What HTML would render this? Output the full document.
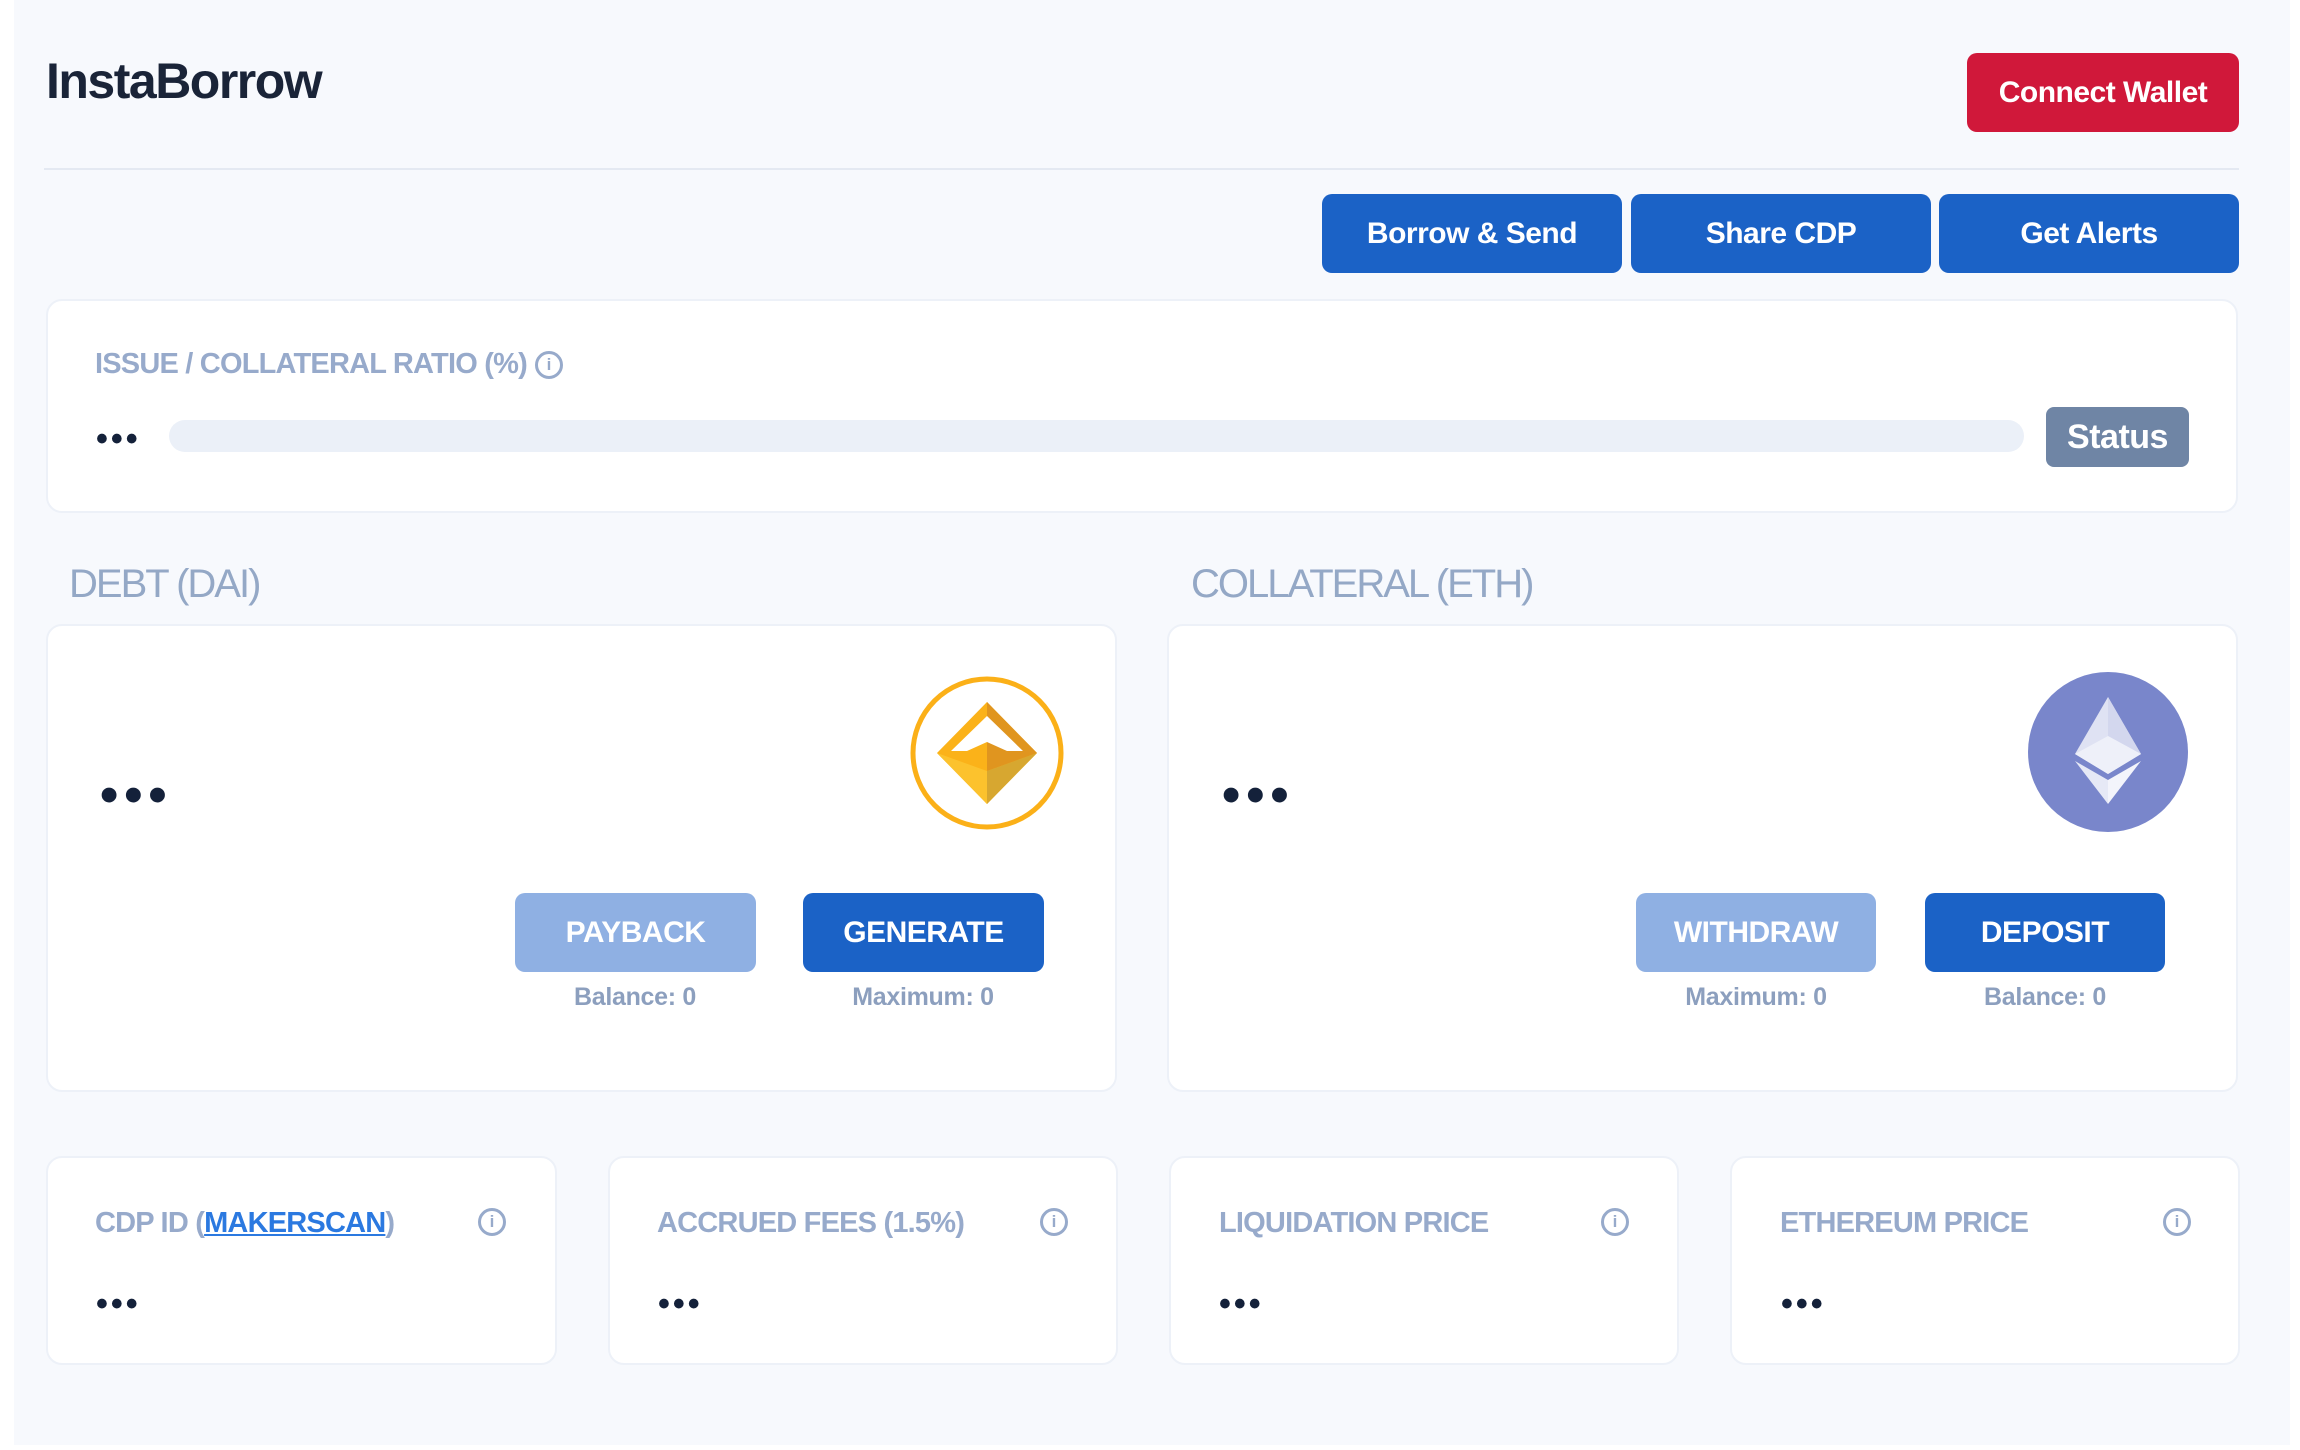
<!DOCTYPE html>
<html><head><meta charset="utf-8"><style>
*{box-sizing:border-box;margin:0;padding:0}
body{width:2300px;height:1450px;background:#fff;font-family:"Liberation Sans",Arial,sans-serif;position:relative;overflow:hidden}
.page{position:absolute;left:14px;top:0;width:2276px;height:1445px;background:#f7f9fd}
.a{position:absolute}
.title{left:46px;top:52px;font-size:50px;font-weight:700;color:#1a2438;letter-spacing:-1.5px}
.btn{position:absolute;border-radius:10px;color:#fff;font-weight:700;display:flex;align-items:center;justify-content:center;font-size:30px;letter-spacing:-0.5px}
.blue{background:#1b62c6}
.card{position:absolute;background:#fff;border:2px solid #edf1f8;border-radius:16px}
.lbl{position:absolute;color:#97aacb;font-weight:700;font-size:29px;white-space:nowrap;letter-spacing:-0.8px}
.dots{position:absolute;color:#14213a;font-weight:700;letter-spacing:3px}
.info{position:absolute;width:28px;height:28px;border:3px solid #97aacb;border-radius:50%;color:#97aacb;font-size:17px;font-weight:700;text-align:center;line-height:22px;letter-spacing:0}
.iinfo{display:inline-block;vertical-align:middle;margin-left:8px;width:28px;height:28px;border:3px solid #97aacb;border-radius:50%;color:#97aacb;font-size:17px;font-weight:700;text-align:center;line-height:22px;letter-spacing:0}
.sub{position:absolute;color:#8c9fbe;font-size:25px;font-weight:700;text-align:center;width:240px;letter-spacing:-0.3px}
</style></head><body>
<div class="page"></div>
<div class="a title">InstaBorrow</div>
<div class="btn" style="left:1967px;top:53px;width:272px;height:79px;background:#d0183a">Connect Wallet</div>
<div class="a" style="left:44px;top:168px;width:2195px;height:2px;background:#e4e9f2"></div>
<div class="btn blue" style="left:1322px;top:194px;width:300px;height:79px">Borrow &amp; Send</div>
<div class="btn blue" style="left:1631px;top:194px;width:300px;height:79px">Share CDP</div>
<div class="btn blue" style="left:1939px;top:194px;width:300px;height:79px">Get Alerts</div>

<div class="card" style="left:46px;top:299px;width:2192px;height:214px"></div>
<div class="lbl" style="left:95px;top:348px">ISSUE / COLLATERAL RATIO (%)<span class="iinfo">i</span></div>
<div class="dots" style="left:96px;top:420px;font-size:34px">•••</div>
<div class="a" style="left:169px;top:420px;width:1855px;height:32px;border-radius:16px;background:#ebf0f8"></div>
<div class="btn" style="left:2046px;top:407px;width:143px;height:60px;background:#6f85a5;border-radius:8px;font-size:34px">Status</div>

<div class="lbl" style="left:69px;top:562px;font-size:40px;font-weight:400;color:#94a8c6;letter-spacing:-2px">DEBT (DAI)</div>
<div class="lbl" style="left:1191px;top:562px;font-size:40px;font-weight:400;color:#94a8c6;letter-spacing:-2px">COLLATERAL (ETH)</div>

<div class="card" style="left:46px;top:624px;width:1071px;height:468px"></div>
<div class="card" style="left:1167px;top:624px;width:1071px;height:468px"></div>
<div class="dots" style="left:100px;top:765px;font-size:52px;letter-spacing:6px">•••</div>
<div class="dots" style="left:1222px;top:765px;font-size:52px;letter-spacing:6px">•••</div>

<svg class="a" style="left:909px;top:675px" width="156" height="156" viewBox="0 0 156 156">
<circle cx="78" cy="78" r="74" fill="none" stroke="#fbb018" stroke-width="5"/>
<polygon points="78,27 128,78 78,129 28,78" fill="#fbb219"/>
<polygon points="78,27 128,78 78,96" fill="#e0951f"/>
<polygon points="28,78 78,96 78,129" fill="#fcc22d"/>
<polygon points="78,96 128,78 78,129" fill="#d7a730"/>
<polygon points="78,41 114,76 98,76 78,67 58,76 42,76" fill="#fff"/>
</svg>
<svg class="a" style="left:2028px;top:672px" width="160" height="160" viewBox="0 0 160 160">
<circle cx="80" cy="80" r="80" fill="#7986cb"/>
<polygon points="80,25 113,82 80,102 47,82" fill="#dfe2f3"/>
<polygon points="80,25 113,82 80,64" fill="#d3d7ee"/>
<polygon points="47,82 80,64 113,82 80,102" fill="#eef0f9"/>
<polygon points="47,89 80,108 80,132" fill="#e6e9f6"/>
<polygon points="113,89 80,108 80,132" fill="#f3f4fb"/>
</svg>

<div class="btn" style="left:515px;top:893px;width:241px;height:79px;background:#8fb0e3">PAYBACK</div>
<div class="btn blue" style="left:803px;top:893px;width:241px;height:79px">GENERATE</div>
<div class="btn" style="left:1636px;top:893px;width:240px;height:79px;background:#8fb0e3">WITHDRAW</div>
<div class="btn blue" style="left:1925px;top:893px;width:240px;height:79px">DEPOSIT</div>
<div class="sub" style="left:515px;top:983px">Balance: 0</div>
<div class="sub" style="left:803px;top:983px">Maximum: 0</div>
<div class="sub" style="left:1636px;top:983px">Maximum: 0</div>
<div class="sub" style="left:1925px;top:983px">Balance: 0</div>

<div class="card" style="left:46px;top:1156px;width:511px;height:209px"></div>
<div class="card" style="left:608px;top:1156px;width:510px;height:209px"></div>
<div class="card" style="left:1169px;top:1156px;width:510px;height:209px"></div>
<div class="card" style="left:1730px;top:1156px;width:510px;height:209px"></div>
<div class="lbl" style="left:95px;top:1207px">CDP ID (<span style="color:#2b79e0;text-decoration:underline">MAKERSCAN</span>)</div>
<div class="lbl" style="left:657px;top:1207px">ACCRUED FEES (1.5%)</div>
<div class="lbl" style="left:1219px;top:1207px">LIQUIDATION PRICE</div>
<div class="lbl" style="left:1780px;top:1207px">ETHEREUM PRICE</div>
<div class="info" style="left:478px;top:1208px">i</div>
<div class="info" style="left:1040px;top:1208px">i</div>
<div class="info" style="left:1601px;top:1208px">i</div>
<div class="info" style="left:2163px;top:1208px">i</div>
<div class="dots" style="left:96px;top:1285px;font-size:34px">•••</div>
<div class="dots" style="left:658px;top:1285px;font-size:34px">•••</div>
<div class="dots" style="left:1219px;top:1285px;font-size:34px">•••</div>
<div class="dots" style="left:1781px;top:1285px;font-size:34px">•••</div>
</body></html>
